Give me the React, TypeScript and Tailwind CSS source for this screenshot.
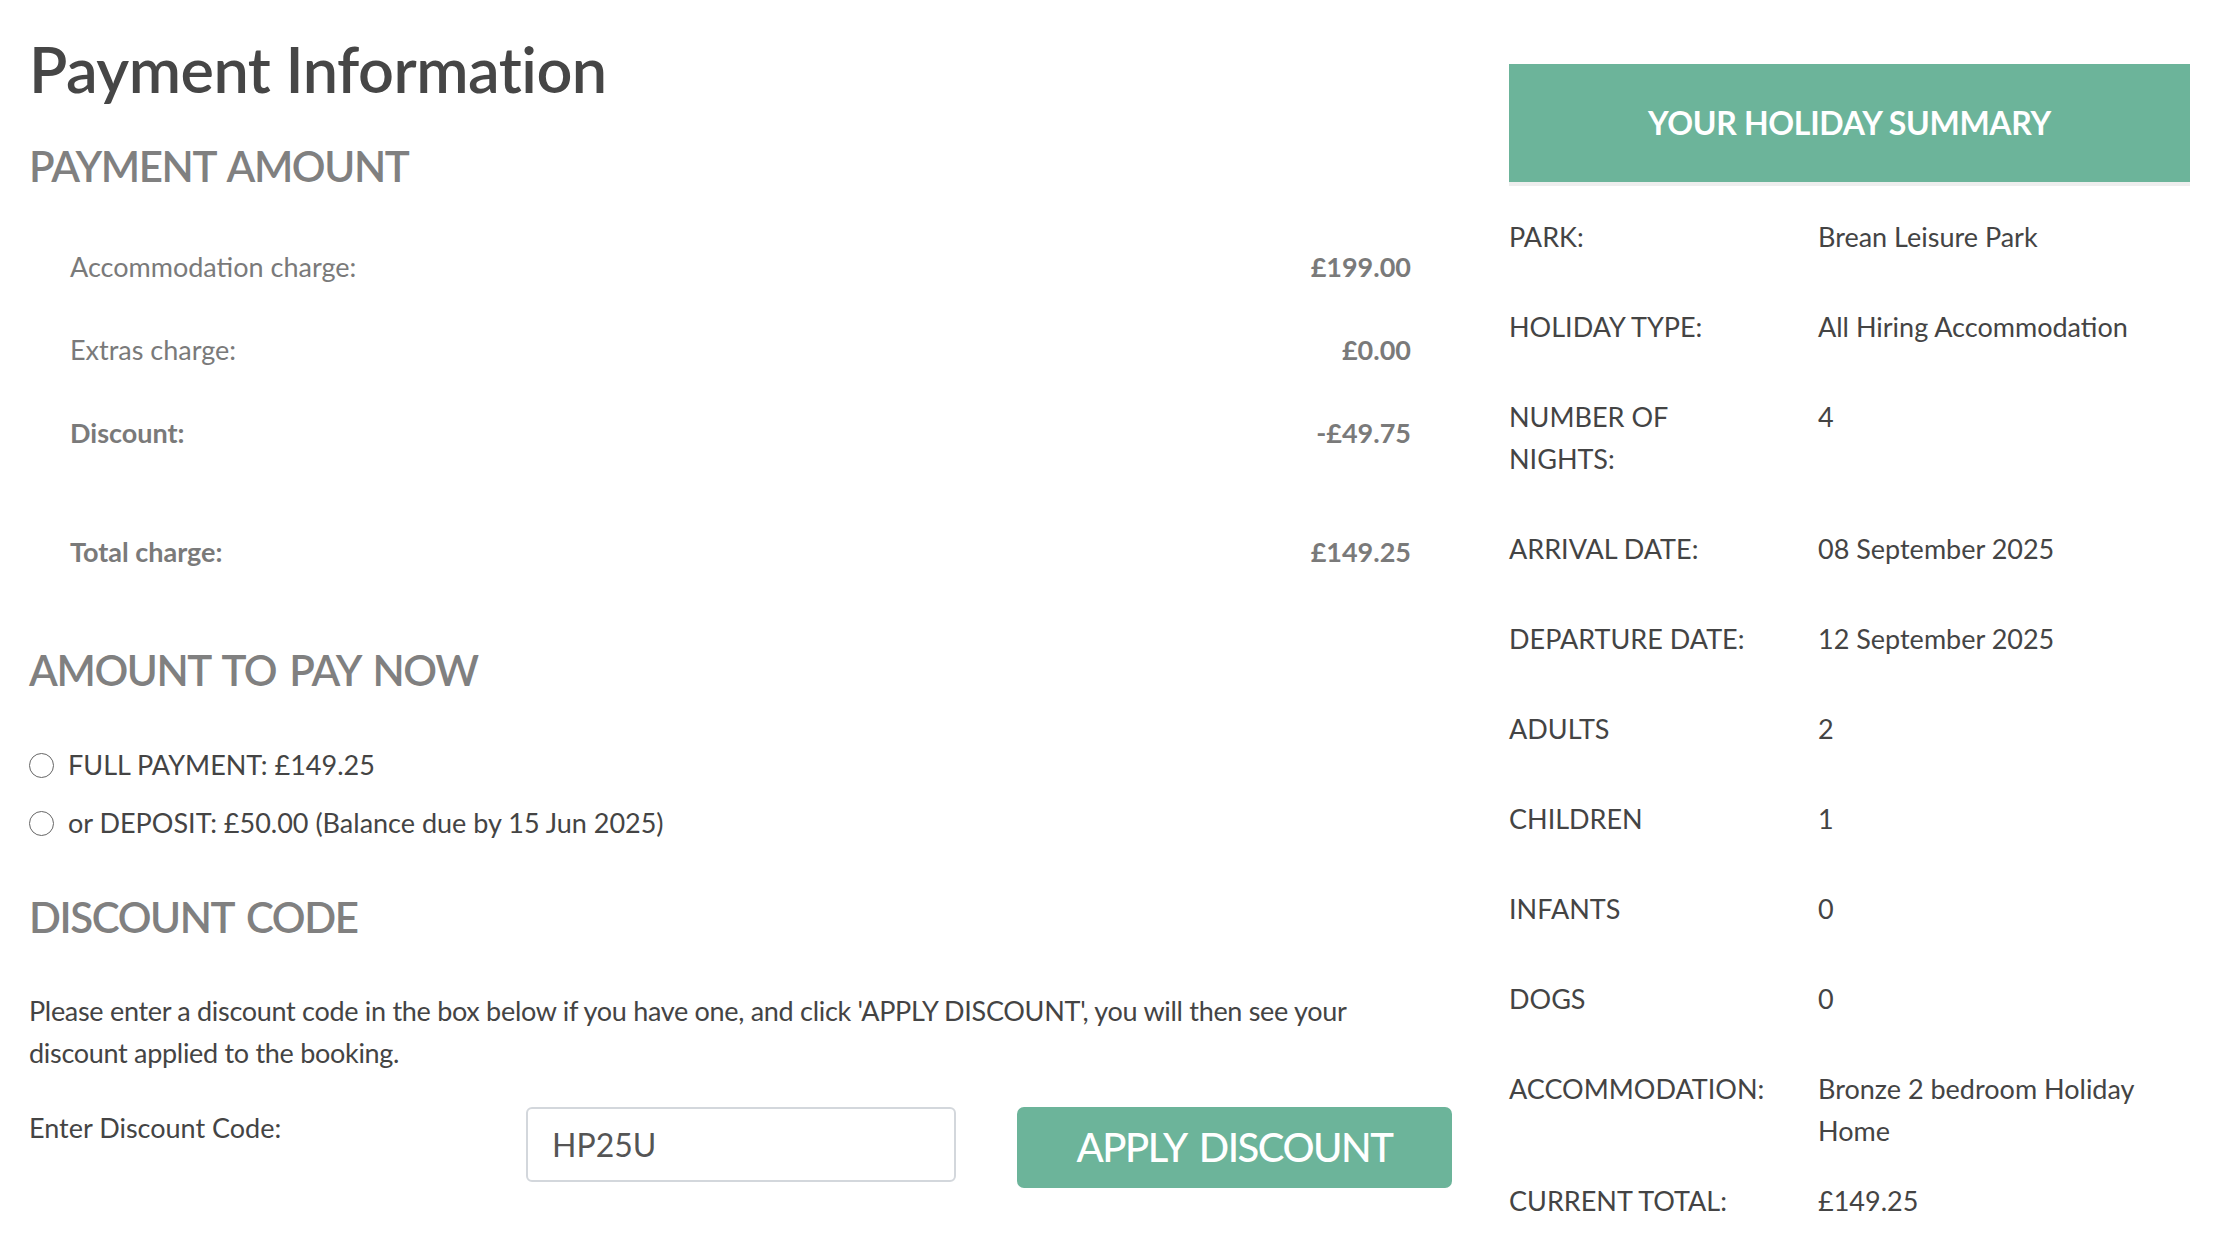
import React from 'react';

const GREEN = 'bg-[#6cb49a]';

interface ChargeRowProps {
  label: string;
  value: string;
  bold?: boolean;
}

function ChargeRow({ label, value, bold }: ChargeRowProps) {
  return (
    <div
      className={`flex h-[83px] items-center justify-between pl-[41px] pr-[41px] text-[27px] leading-[42px] text-[#7a7a7a] ${
        bold ? 'font-bold' : ''
      }`}
    >
      <span>{label}</span>
      <span className="font-bold">{value}</span>
    </div>
  );
}

function Radio({ children }: { children: React.ReactNode }) {
  return (
    <label className="flex items-center text-[27px] leading-[42px] text-[#444]">
      <span className="h-[25px] w-[25px] shrink-0 rounded-full border-[1.5px] border-[#666] bg-white" />
      <span className="ml-[14px]">{children}</span>
    </label>
  );
}

interface SummaryRowProps {
  label: React.ReactNode;
  value: React.ReactNode;
  className?: string;
}

function SummaryRow({ label, value, className = 'py-[24px]' }: SummaryRowProps) {
  return (
    <div className={`flex text-[27px] leading-[42px] text-[#444] ${className}`}>
      <div className="w-[309px] shrink-0 whitespace-nowrap">{label}</div>
      <div className="flex-1">{value}</div>
    </div>
  );
}

export default function App() {
  return (
    <div className="min-h-screen bg-white font-[Lato,'Open_Sans',sans-serif] text-[#444]">
      <div className="flex pl-[29px] pr-[32px]">
        {/* left column */}
        <div className="w-[1423px] shrink-0">
          <h1 className="pt-[31px] text-[63px] font-semibold leading-[1.2] tracking-[-0.5px] text-[#464646]">
            Payment Information
          </h1>

          <h2 className="mt-[34px] text-[42px] font-semibold leading-[1.2] tracking-[-1.4px] [word-spacing:4px] text-[#808080]">
            PAYMENT AMOUNT
          </h2>

          <div className="mt-[35px]">
            <ChargeRow label="Accommodation charge:" value="£199.00" />
            <ChargeRow label="Extras charge:" value="£0.00" />
            <ChargeRow label="Discount:" value="-£49.75" bold />
            <div className="h-[36px]" />
            <ChargeRow label="Total charge:" value="£149.25" bold />
          </div>

          <h2 className="mt-[51px] text-[42px] font-semibold leading-[1.2] tracking-[-1.4px] [word-spacing:4px] text-[#808080]">
            AMOUNT TO PAY NOW
          </h2>

          <div className="mt-[49px] flex flex-col gap-[16px]">
            <Radio>FULL PAYMENT: £149.25</Radio>
            <Radio>or DEPOSIT: £50.00 (Balance due by 15 Jun 2025)</Radio>
          </div>

          <h2 className="mt-[48px] text-[42px] font-semibold leading-[1.2] tracking-[-1.4px] [word-spacing:4px] text-[#808080]">
            DISCOUNT CODE
          </h2>

          <p className="mt-[47px] text-[27px] leading-[42px] tracking-[-0.3px] text-[#444]">
            Please enter a discount code in the box below if you have one, and click 'APPLY DISCOUNT', you will then see your
            <br />
            discount applied to the booking.
          </p>

          <div className="mt-[33px] flex items-start">
            <div className="w-[497px] shrink-0 text-[27px] leading-[42px]">Enter Discount Code:</div>
            <input
              defaultValue="HP25U"
              className="h-[75px] w-[430px] rounded-[6px] border-2 border-[#d3d7dc] pl-[24px] text-[32px] text-[#555] outline-none"
            />
            <button
              className={`ml-[61px] h-[81px] w-[435px] rounded-[7px] ${GREEN} text-[40px] font-medium tracking-[-1.5px] [word-spacing:5px] text-white`}
            >
              APPLY DISCOUNT
            </button>
          </div>
        </div>

        {/* right column */}
        <div className="ml-[57px] w-[681px] shrink-0 pt-[64px]">
          <div
            className={`flex h-[122px] items-center justify-center border-b-4 border-[#eeeeee] ${GREEN} text-[32px] font-bold tracking-[-0.3px] text-white`}
          >
            YOUR HOLIDAY SUMMARY
          </div>

          <div className="mt-[6px]">
            <SummaryRow label="PARK:" value="Brean Leisure Park" />
            <SummaryRow label="HOLIDAY TYPE:" value="All Hiring Accommodation" />
            <SummaryRow
              label={
                <>
                  NUMBER OF
                  <br />
                  NIGHTS:
                </>
              }
              value="4"
            />
            <SummaryRow label="ARRIVAL DATE:" value="08 September 2025" />
            <SummaryRow label="DEPARTURE DATE:" value="12 September 2025" />
            <SummaryRow label="ADULTS" value="2" />
            <SummaryRow label="CHILDREN" value="1" />
            <SummaryRow label="INFANTS" value="0" />
            <SummaryRow label="DOGS" value="0" />
            <SummaryRow
              label="ACCOMMODATION:"
              value={
                <>
                  Bronze 2 bedroom Holiday
                  <br />
                  Home
                </>
              }
              className="pt-[24px] pb-[4px]"
            />
            <SummaryRow label="CURRENT TOTAL:" value="£149.25" />
          </div>
        </div>
      </div>
    </div>
  );
}
